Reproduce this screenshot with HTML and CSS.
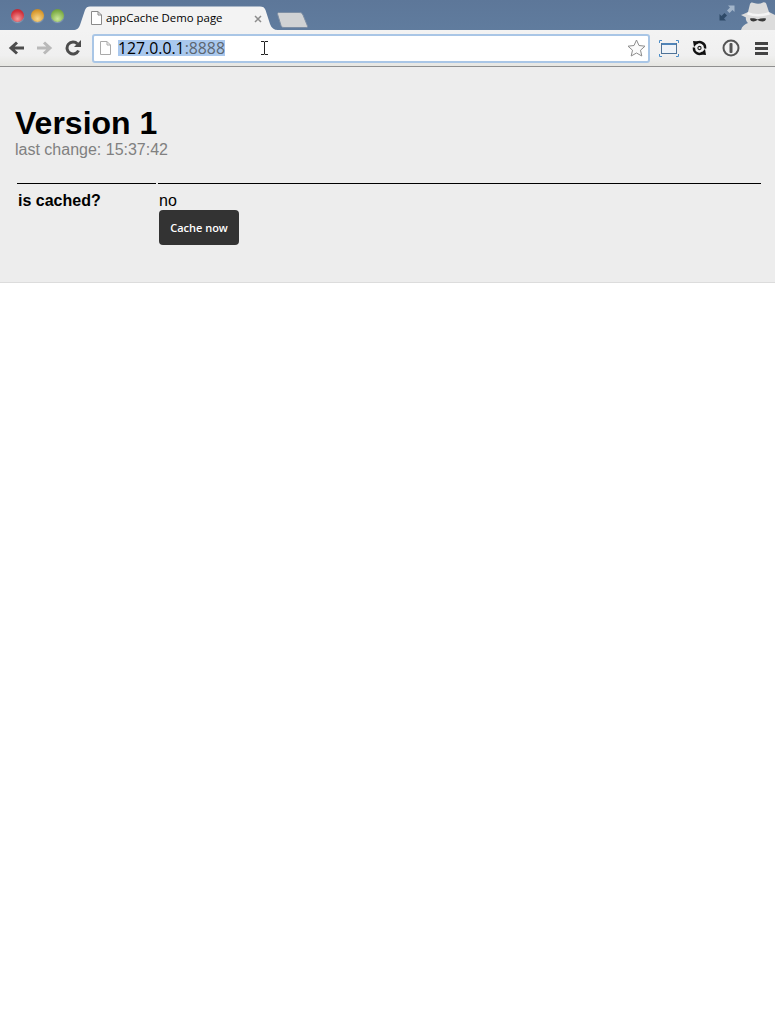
FILE: index.html
```html
<!DOCTYPE html>
<html lang="en">
<head>
<meta charset="utf-8">
<title>appCache Demo page</title>
<link rel="stylesheet" href="styles.css">
</head>
<body>
<header class="browser">
  <div class="tabstrip">
    <div class="lights">
      <span class="light red"></span>
      <span class="light amber"></span>
      <span class="light green"></span>
    </div>
    <div class="tab">
      <svg class="tab-shape" width="205" height="24" viewBox="0 0 205 24"><path d="M0 24C4 24 6 22 7 19L12 4C13 1.500 14.500 .5 17 .5H187C190 .5 191.500 1.500 192.500 4L197 18C198.500 22 201 24 205 24Z" fill="#f3f3f3"/></svg>
      <svg class="page-icon" width="11" height="14" viewBox="0 0 11 14"><path d="M.5.5H7L10.500 4V13.500H.5Z M7 .5V4H10.500" fill="#fff" stroke="#8a8a8a"/></svg>
      <span class="tab-title">appCache Demo page</span>
      <svg class="tab-close" width="8" height="8" viewBox="0 0 8 8"><path d="M1 1L7 7M7 1L1 7" stroke="#8c8c8c" stroke-width="1.500"/></svg>
    </div>
    <svg class="newtab" width="31" height="16" viewBox="0 0 31 16"><path d="M.5 2C.5 1 1 .5 2 .5H22C24 .5 25 1 26 3L30.500 14C31 15 30 15.500 29 15.500H7C5.500 15.500 4.500 15 4 13.500Z" fill="#d0d2d4" stroke="#7d8ea4"/></svg>
    <div class="spacer"></div>
    <svg class="fullscreen" width="16" height="16" viewBox="0 0 16 16"><path d="M9 .5H15.500V7L13.500 5L10.500 8L8 5.500L11 2.500Z" fill="#a3b5ca"/><path d="M7 15.500H.5V9L2.500 11L5.500 8L8 10.500L5 13.500Z" fill="#2f4a68"/></svg>
    <svg class="incognito" width="35" height="30" viewBox="0 0 35 30"><path d="M1 30C2 26 5 24 8 23C6 21 5.500 19 6 17.500L1 15C4 14 6 13 8 12L10 4C10.500 2.500 12 2 14 3C17 4 20 4 23 2.500C25 2 26 3 26.500 4.500L29 12C31 13 33 14 35 15L35 30Z" fill="#dcdcdc"/><path d="M8 12C14 14.500 22 14.500 29 12L30 14.500C22 17 14 17 7 14.500Z" fill="#f4f4f4"/><path d="M10 18.500C13 18 15.500 18.500 17.500 19.500C20 18.500 23 18 26 18.500C26 20.500 24.500 21.500 22.500 21.500C20 21.500 19 20.500 17.500 20C16 20.500 15 21.500 13.500 21.500C11.500 21.500 10 20.500 10 18.500Z" fill="#3a3a3a"/></svg>
  </div>
  <div class="toolbar">
    <svg class="navicon" width="17" height="16" viewBox="0 0 17 16"><path d="M16 8H4M9 2.500L3 8L9 13.500" fill="none" stroke="#4c4c4c" stroke-width="3"/></svg>
    <svg class="navicon nav-forward" width="17" height="16" viewBox="0 0 17 16"><path d="M1 8H13M8 2.500L14 8L8 13.500" fill="none" stroke="#b9b9b9" stroke-width="3"/></svg>
    <svg class="navicon nav-reload" width="16" height="16" viewBox="0 0 16 16"><path d="M13.500 10.500A6 6 0 1 1 12.500 4" fill="none" stroke="#4c4c4c" stroke-width="3"/><path d="M9 7H16V0Z" fill="#4c4c4c"/></svg>
    <div class="omnibox">
      <svg class="omni-page" width="11" height="14" viewBox="0 0 11 14"><path d="M.5.500H7L10.500 4V13.500H.5Z M7 .5V4H10.500" fill="#fff" stroke="#aaa"/></svg>
      <span class="url"><span class="url-host">127.0.0.1</span><span class="url-port">:8888</span></span>
      <svg class="ibeam" width="7" height="14" viewBox="0 0 7 14"><path d="M0 .5H3L3.500 1L4 .5H7M3.500 1V13M0 13.500H3L3.500 13L4 13.500H7" fill="none" stroke="#222"/></svg>
      <div class="spacer"></div>
      <svg class="star" width="19" height="18" viewBox="0 0 19 18"><path d="M9.500 1L12 6.500L18 7.200L13.500 11.200L14.800 17L9.500 14L4.200 17L5.500 11.200L1 7.200L7 6.500Z" fill="#fbfbfb" stroke="#8c8c8c"/></svg>
    </div>
    <svg class="ext ext-screen" width="20" height="17" viewBox="0 0 20 17"><path d="M.5 3V.5H3M17 .5H19.500V3M.5 14V16.500H3M17 16.500H19.500V14" fill="none" stroke="#4a8cc7"/><rect x="2.500" y="3.500" width="15" height="10" fill="#eef3f8" stroke="#4f7397"/><rect x="3" y="3" width="14" height="2" fill="#4f84b8"/></svg>
    <svg class="ext ext-sync" width="15" height="16" viewBox="0 0 15 16"><path d="M4 3.500A5.500 5.500 0 0 1 13 8.500M11 12.500A5.500 5.500 0 0 1 2 7.500" fill="none" stroke="#111" stroke-width="2.400"/><path d="M1 1L7 1.500L2 7ZM14 15L8 14.500L13 9Z" fill="#111"/><circle cx="7.500" cy="8" r="1.600" fill="none" stroke="#222" stroke-width="1.100"/></svg>
    <svg class="ext ext-info" width="18" height="18" viewBox="0 0 18 18"><circle cx="9" cy="9" r="7.500" fill="none" stroke="#555" stroke-width="2"/><rect x="7.500" y="4" width="3" height="10" rx="1" fill="#555"/></svg>
    <div class="menu"><span></span><span></span><span></span></div>
  </div>
</header>
<main class="hero">
  <h1 class="title">Version 1</h1>
  <p class="subtitle">last change: 15:37:42</p>
  <div class="status">
    <div class="status-label">is cached?</div>
    <div class="status-value">
      <div class="status-text">no</div>
      <button class="cache-btn" type="button">Cache now</button>
    </div>
  </div>
</main>
</body>
</html>
```
FILE: styles.css
```css
* { box-sizing: border-box; }
html, body { margin: 0; padding: 0; background: #fff; }
body { font-family: "Liberation Sans", Arial, sans-serif; color: #000; }
svg { display: block; flex: none; }

.spacer { flex: 1; }

.tabstrip {
  height: 30px;
  background: linear-gradient(#5d7799, #607c9e);
  display: flex;
  align-items: flex-start;
  overflow: hidden;
}
.lights { display: flex; gap: 7px; padding: 9px 0 0 11px; width: 73px; flex: none; }
.light { width: 13px; height: 13px; border-radius: 50%; flex: none; box-shadow: 0 1px 1px rgba(255, 255, 255, .3); }
.red { background: radial-gradient(circle at 50% 75%, #f79a9a, #d0303a 65%, #b0242c); }
.amber { background: radial-gradient(circle at 50% 75%, #f8d88c, #d99a30 65%, #b07a20); }
.green { background: radial-gradient(circle at 50% 75%, #cbe89a, #7fae48 65%, #5f8c30); }

.tab {
  position: relative;
  width: 205px;
  height: 24px;
  margin-top: 6px;
  display: flex;
  align-items: center;
  padding: 0 0 0 18px;
  flex: none;
}
.tab-shape { position: absolute; left: 0; top: 0; }
.page-icon { position: relative; }
.tab-title { position: relative; margin-left: 4px; font: 11.4px/14px "Open Sans", sans-serif; color: #000; white-space: nowrap; }
.tab-close { position: absolute; right: 16px; top: 9px; }
.newtab { margin: 12px 0 0 -1px; }
.fullscreen { margin: 5px 5px 0 0; }

.toolbar {
  height: 37px;
  background: linear-gradient(#f3f3f3, #f0f0f0 70%, #e6e6e2);
  border-bottom: 1px solid #8f8f8f;
  display: flex;
  align-items: center;
  padding: 0 7px 0 8px;
}
.navicon { margin-right: 11px; }
.nav-forward { margin-right: 12px; }
.nav-reload { margin-right: 11px; }
.omnibox {
  flex: none;
  width: 558px;
  height: 29px;
  background: #fff;
  border: 2px solid #a9c6e6;
  border-radius: 3px;
  display: flex;
  align-items: center;
  padding: 0 2px 0 6px;
}
.url { margin-left: 7px; font: 15.8px/16px "Open Sans", sans-serif; background: #a9c8ee; height: 16px; width: 107px; white-space: nowrap; }
.url-host { color: #000; }
.url-port { color: #5c6670; }
.ibeam { margin-left: 36px; }
.ext-screen { margin-left: 9px; }
.ext-sync { margin-left: 13px; }
.ext-info { margin-left: 15px; }
.menu { margin-left: 15px; width: 13px; flex: none; display: flex; flex-direction: column; gap: 2px; }
.menu span { height: 3px; background: #444; }

.hero {
  height: 216px;
  background: #ededed;
  border-bottom: 1px solid #dcdcdc;
  padding: 38px 14px 0 15px;
}
.title { margin: 0; font: bold 32px/36px "Liberation Sans", sans-serif; color: #000; }
.subtitle { margin: 0; font: 16px/18px "Liberation Sans", sans-serif; color: #808080; }
.status { display: flex; gap: 2px; margin: 24px 0 0 2px; }
.status-label { width: 139px; border-top: 1px solid #000; padding: 8px 1px; font: bold 16px/18px "Liberation Sans", sans-serif; }
.status-value { flex: 1; border-top: 1px solid #000; padding: 8px 1px; }
.status-text { font: 16px/18px "Liberation Sans", sans-serif; }
.cache-btn {
  display: block;
  width: 80px;
  height: 35px;
  border: 0;
  border-radius: 4px;
  background: #333;
  color: #fff;
  font: 600 11px/14px "Open Sans", sans-serif;
  padding: 0;
}
```
